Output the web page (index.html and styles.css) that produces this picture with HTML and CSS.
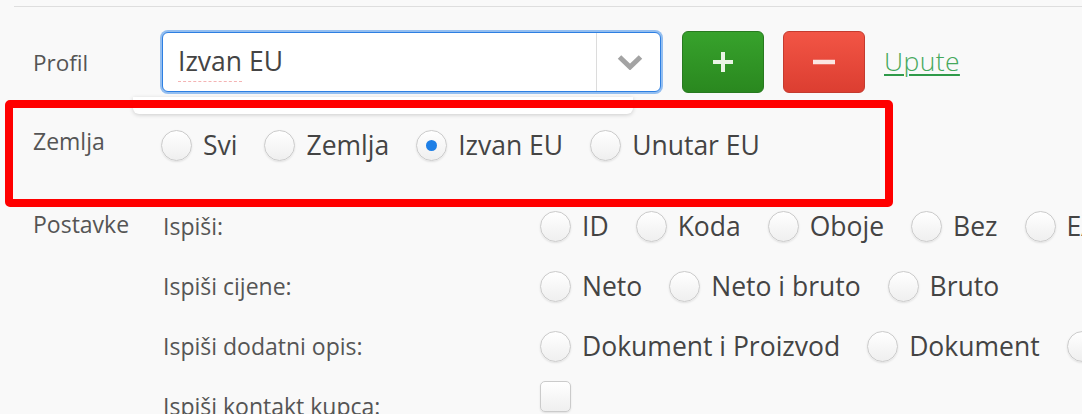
FILE: index.html
```html
<!DOCTYPE html>
<html lang="hr">
<head>
<meta charset="utf-8">
<title>Profil</title>
<link rel="stylesheet" href="styles.css">
</head>
<body>
<div class="page">
  <div class="topline"></div>
  <div class="form">
    <div class="row row-profil">
      <div class="label">Profil</div>
      <div class="ctrl">
        <div class="select-wrap">
          <div class="select">
            <span class="select-value"><span class="spell">Izvan</span> EU</span>
            <span class="select-arrow">
              <svg width="26" height="16" viewBox="0 0 26 16"><polyline points="2.5,3 13,13 23.5,3" fill="none" stroke="#a3a3a3" stroke-width="5"/></svg>
            </span>
          </div>
          <div class="dropdown"></div>
        </div>
        <button class="btn btn-add" type="button">
          <svg width="22" height="20" viewBox="0 0 22 20"><path d="M11 0v20M1 10h20" stroke="#e9f4e4" stroke-width="4" fill="none"/></svg>
        </button>
        <button class="btn btn-remove" type="button">
          <svg width="22" height="6" viewBox="0 0 22 6"><path d="M0 3h22" stroke="#fbe6e3" stroke-width="4.5" fill="none"/></svg>
        </button>
        <a class="link" href="#">Upute</a>
      </div>
    </div>

    <div class="row row-zemlja">
      <div class="label">Zemlja</div>
      <div class="radios">
        <label class="radio"><span class="dot"></span>Svi</label>
        <label class="radio"><span class="dot"></span>Zemlja</label>
        <label class="radio"><span class="dot checked"></span>Izvan EU</label>
        <label class="radio"><span class="dot"></span>Unutar EU</label>
      </div>
      <div class="highlight"></div>
    </div>

    <div class="row row-postavke">
      <div class="label label-top">Postavke</div>
      <div class="settings">
        <div class="setting">
          <div class="sublabel">Ispiši:</div>
          <div class="radios">
            <label class="radio"><span class="dot"></span>ID</label>
            <label class="radio"><span class="dot"></span>Koda</label>
            <label class="radio"><span class="dot"></span>Oboje</label>
            <label class="radio"><span class="dot"></span>Bez</label>
            <label class="radio"><span class="dot"></span>EAN</label>
          </div>
        </div>
        <div class="setting">
          <div class="sublabel">Ispiši cijene:</div>
          <div class="radios">
            <label class="radio"><span class="dot"></span>Neto</label>
            <label class="radio"><span class="dot"></span>Neto i bruto</label>
            <label class="radio"><span class="dot"></span>Bruto</label>
          </div>
        </div>
        <div class="setting">
          <div class="sublabel">Ispiši dodatni opis:</div>
          <div class="radios">
            <label class="radio"><span class="dot"></span>Dokument i Proizvod</label>
            <label class="radio"><span class="dot"></span>Dokument</label>
            <label class="radio"><span class="dot"></span>Proizvod</label>
          </div>
        </div>
        <div class="setting">
          <div class="sublabel">Ispiši kontakt kupca:</div>
          <div class="radios">
            <span class="checkbox"></span>
          </div>
        </div>
      </div>
    </div>
  </div>
</div>
</body>
</html>
```

FILE: styles.css
```css
html, body {
  margin: 0;
  padding: 0;
  background: #f9f9f9;
  overflow: hidden;
}

body {
  width: 1082px;
  height: 414px;
  font-family: "Open Sans", "Noto Sans", sans-serif;
  color: #444;
}

.page {
  padding-top: 6px;
}

.topline {
  margin-left: 14px;
  border-top: 1px solid #dedede;
}

.form {
  display: flex;
  flex-direction: column;
}

.row {
  position: relative;
  display: flex;
  align-items: center;
  padding-left: 33px;
}

.label {
  width: 127px;
  flex: none;
  font-size: 23px;
  color: #555;
}

.label-top {
  align-self: flex-start;
  height: 56px;
  display: flex;
  align-items: center;
}

/* Profil row */
.row-profil {
  margin-top: 24px;
  height: 62px;
}

.row-profil .label {
  font-size: 22.5px;
}

.ctrl {
  display: flex;
  align-items: center;
  white-space: nowrap;
}

.select-wrap {
  position: relative;
  margin-left: 2px;
  width: 499px;
  height: 60px;
}

.select {
  position: relative;
  z-index: 2;
  box-sizing: border-box;
  width: 100%;
  height: 100%;
  display: flex;
  align-items: center;
  background: #fff;
  border: 1px solid #2d7fe2;
  border-radius: 6px;
  box-shadow: 0 0 0 2px #93bef0;
}

.select-value {
  flex: 1;
  padding-left: 15px;
  padding-bottom: 2px;
  font-size: 26.5px;
  color: #444;
}

.spell {
  padding-bottom: 2px;
  border-bottom: 1px dashed #f4b3b3;
}

.select-arrow {
  flex: none;
  width: 63px;
  height: 100%;
  border-left: 1px solid #dcdcdc;
  display: flex;
  align-items: center;
  justify-content: center;
}

.select-arrow svg {
  display: block;
  margin-left: 2px;
}

.dropdown {
  position: absolute;
  z-index: 1;
  left: -29px;
  top: 65px;
  width: 500px;
  height: 17px;
  background: #fff;
  border-radius: 0 0 6px 6px;
  box-shadow: 0 1px 4px rgba(0, 0, 0, 0.18);
}

.btn {
  box-sizing: border-box;
  width: 82px;
  height: 62px;
  border-radius: 6px;
  padding: 0;
  display: flex;
  align-items: center;
  justify-content: center;
  cursor: pointer;
}

.btn-add {
  margin-left: 21px;
  background: linear-gradient(#37a22c, #2a881f);
  border: 1px solid #287a20;
}

.btn-remove {
  margin-left: 19px;
  background: linear-gradient(#f25545, #dc3e31);
  border: 1px solid #c43b2f;
}

.link {
  margin-left: 19px;
  margin-bottom: 2px;
  font-size: 26.5px;
  font-weight: 300;
  letter-spacing: 0.4px;
  color: #45a85c;
  text-decoration: underline;
  text-decoration-color: #2f9a4a;
  text-decoration-thickness: 2px;
  text-underline-offset: 3px;
}

/* Zemlja row */
.row-zemlja {
  margin-top: 22px;
  height: 60px;
}

.row-zemlja .label {
  padding-bottom: 8px;
}

.highlight {
  position: absolute;
  z-index: 5;
  left: 5px;
  top: -15px;
  width: 888px;
  height: 107px;
  box-sizing: border-box;
  border: 8px solid #ff0000;
  border-radius: 5px;
  pointer-events: none;
}

/* radios */
.radios {
  display: flex;
  align-items: center;
  white-space: nowrap;
  padding-left: 1px;
}

.radio {
  display: inline-flex;
  align-items: center;
  gap: 11px;
  margin-right: 27px;
  font-size: 26.5px;
  color: #444;
}

.dot {
  flex: none;
  box-sizing: border-box;
  width: 31px;
  height: 31px;
  border-radius: 50%;
  border: 1px solid #cbcbcb;
  background: linear-gradient(#ffffff, #efefef);
  box-shadow: 0 1px 2px rgba(0, 0, 0, 0.1);
  display: grid;
  place-items: center;
}

.dot.checked::after {
  content: "";
  width: 11px;
  height: 11px;
  border-radius: 50%;
  background: #1e7fe6;
}

.checkbox {
  box-sizing: border-box;
  width: 31px;
  height: 31px;
  border-radius: 5px;
  border: 1px solid #cbcbcb;
  background: linear-gradient(#ffffff, #efefef);
  box-shadow: 0 1px 2px rgba(0, 0, 0, 0.1);
  margin-top: -20px;
}

/* Postavke row */
.row-postavke {
  margin-top: 21px;
  align-items: flex-start;
}

.settings {
  display: flex;
  flex-direction: column;
}

.setting {
  display: flex;
  align-items: center;
  height: 60px;
}

.sublabel {
  flex: none;
  box-sizing: border-box;
  width: 379px;
  padding-left: 3px;
  font-size: 23px;
  color: #555;
}
```
